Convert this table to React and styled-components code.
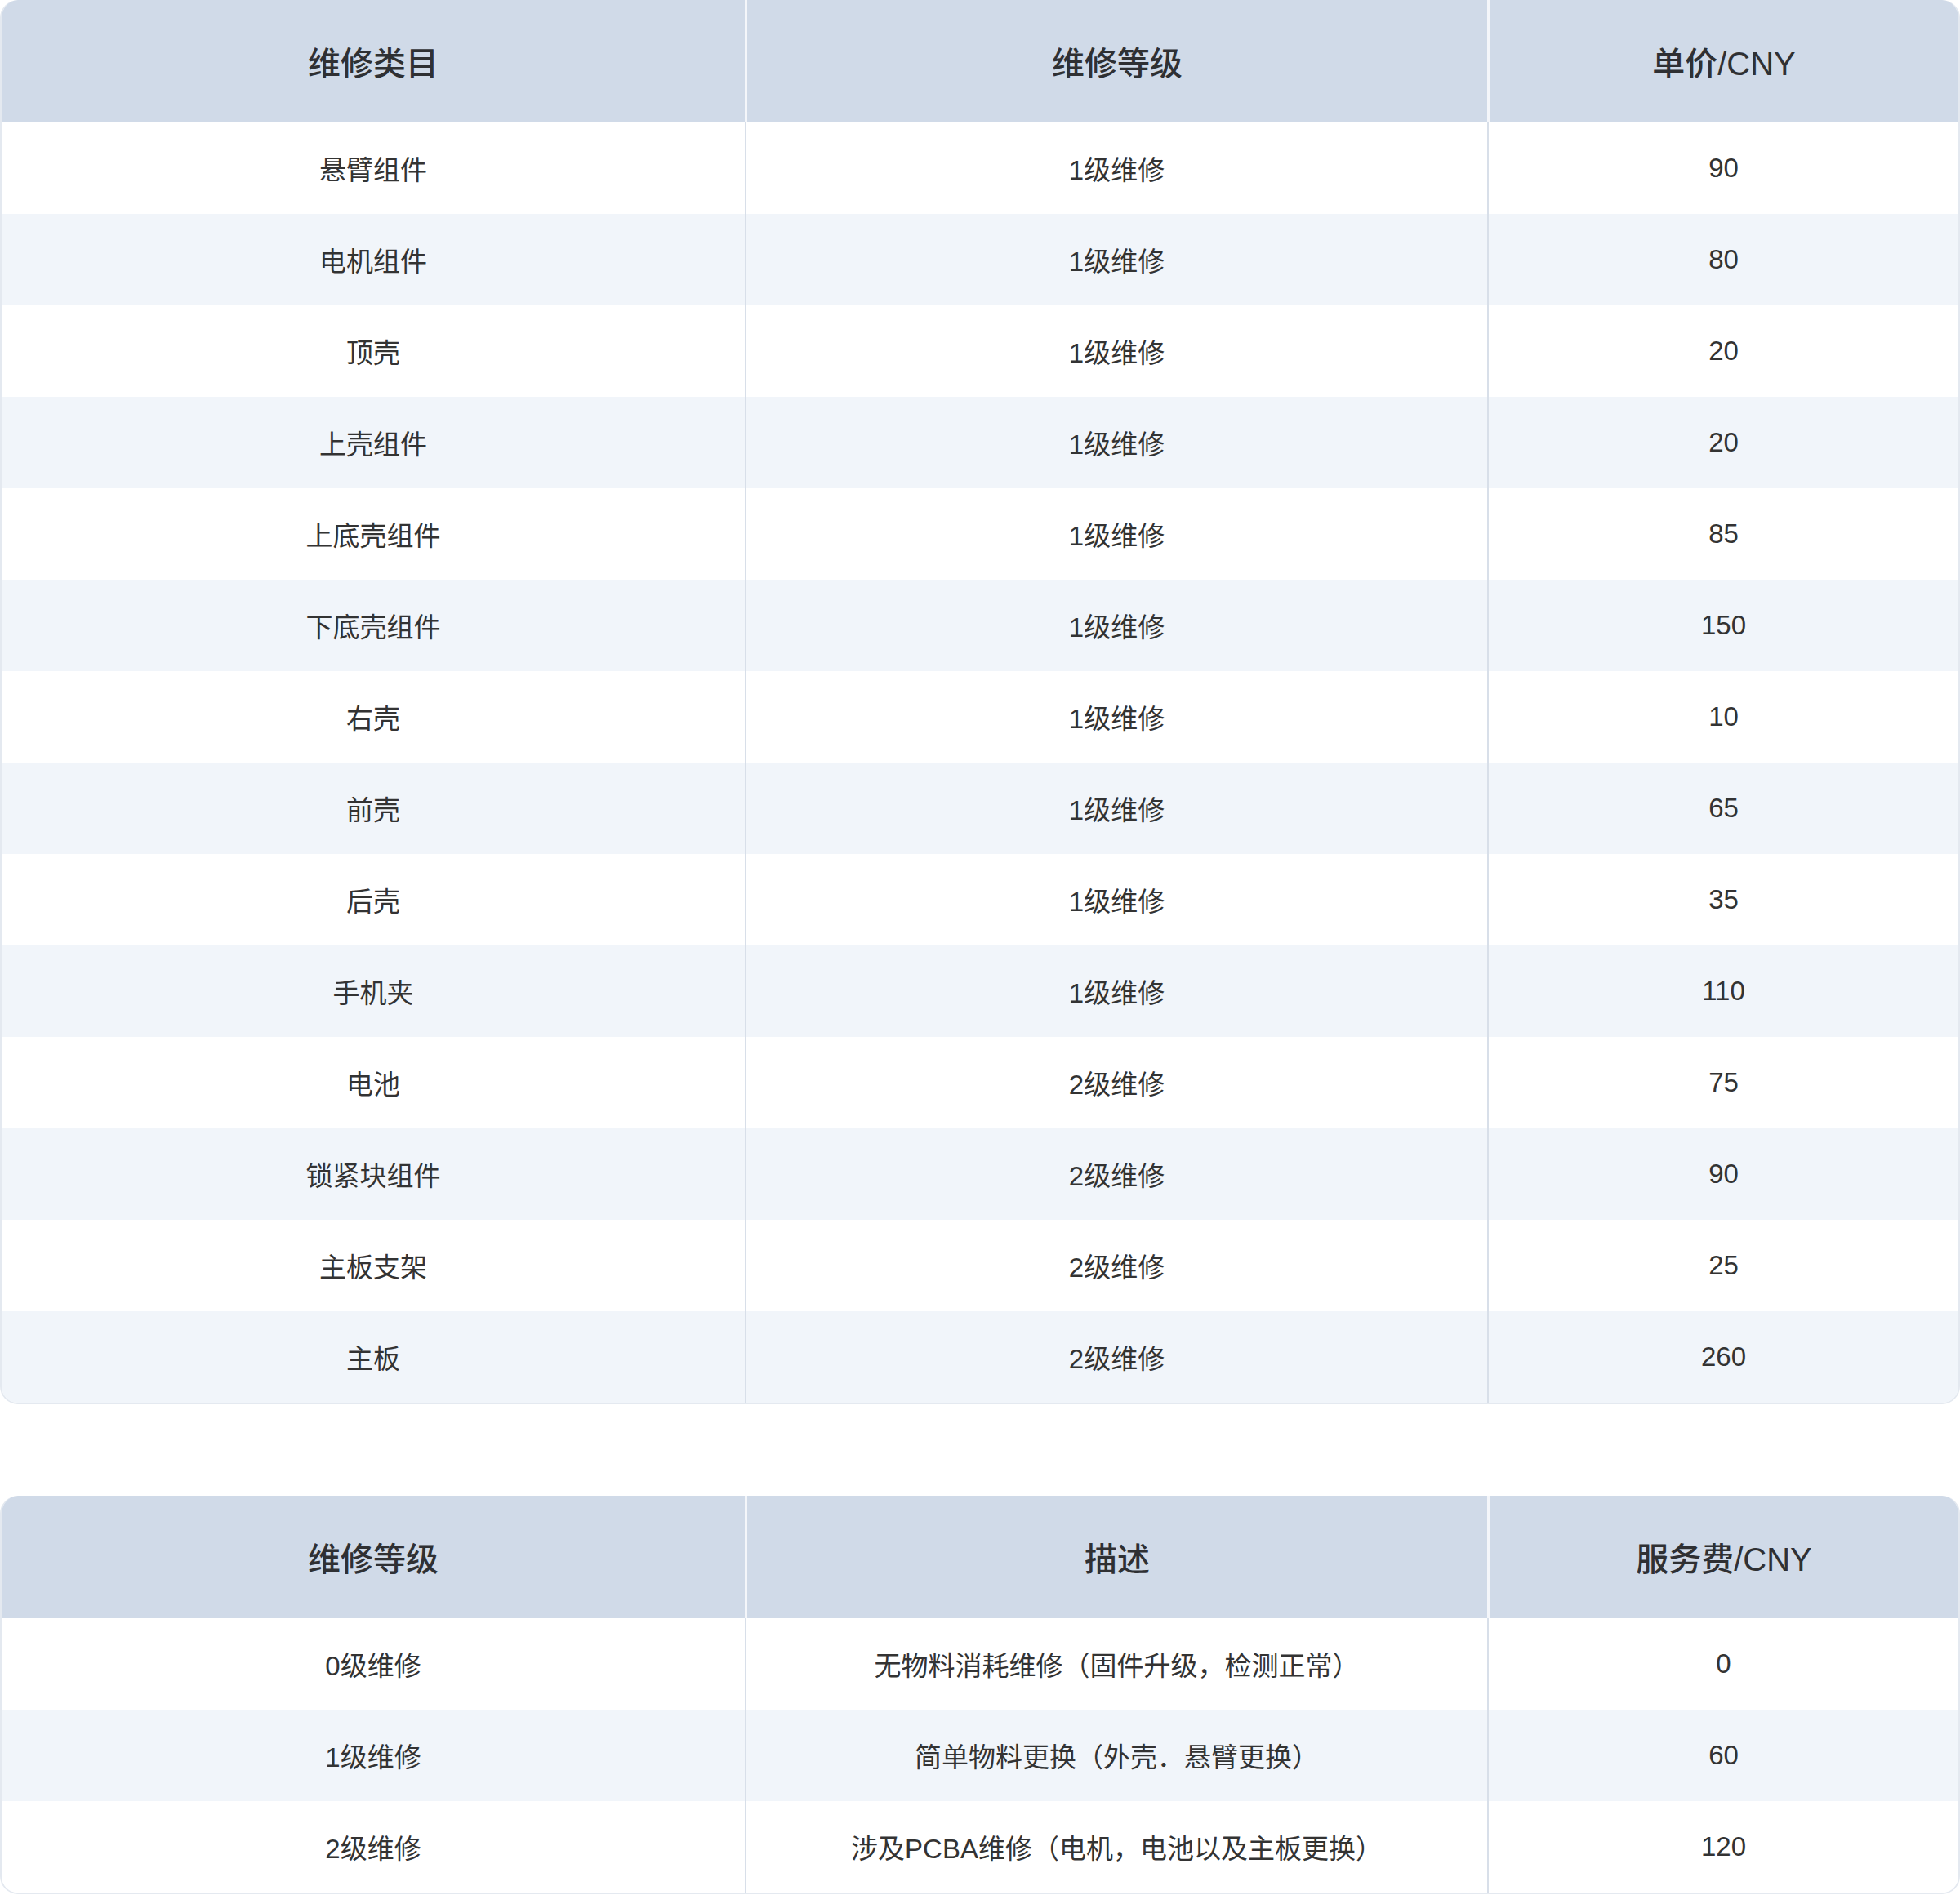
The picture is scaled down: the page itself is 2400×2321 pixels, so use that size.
import React from 'react'
import styled, {createGlobalStyle} from 'styled-components'

const GlobalStyle = createGlobalStyle`
  html, body {
    margin: 0;
    padding: 0;
    background: #ffffff;
  }
  body {
    font-family: "Liberation Sans", "Noto Sans CJK SC", sans-serif;
    color: #333333;
  }
`

const Page = styled.div`
  display: flex;
  flex-direction: column;
  gap: 112px;
  width: 2400px;
`

const Card = styled.div`
  border: 2px solid #e4e9f0;
  border-top: none;
  border-radius: 22px;
  overflow: hidden;
  background: #ffffff;
`

const Grid = styled.div`
  display: grid;
  grid-template-columns: 910px 909px 1fr;
`

const HeadCell = styled.div`
  height: 150px;
  display: flex;
  align-items: center;
  justify-content: center;
  background: #d0dae8;
  font-size: 40px;
  font-weight: 500;
  color: #2f3033;
  border-left: ${p => (p.first ? 'none' : '3px solid #f4f6fa')};
`

const Cell = styled.div`
  height: 112px;
  display: flex;
  align-items: center;
  justify-content: center;
  font-size: 33px;
  color: #333333;
  background: ${p => (p.odd ? '#f1f5fa' : '#ffffff')};
  border-left: ${p => (p.first ? 'none' : '2px solid #d8dfe9')};
`

const PriceTable = ({columns, rows}) => (
  <Card>
    <Grid>
      {columns.map((c, i) => (
        <HeadCell key={c} first={i === 0}>{c}</HeadCell>
      ))}
      {rows.map((r, ri) =>
        r.map((v, ci) => (
          <Cell key={ri + '-' + ci} first={ci === 0} odd={ri % 2 === 1}>{v}</Cell>
        ))
      )}
    </Grid>
  </Card>
)

const parts = [
  ['悬臂组件', '1级维修', '90'],
  ['电机组件', '1级维修', '80'],
  ['顶壳', '1级维修', '20'],
  ['上壳组件', '1级维修', '20'],
  ['上底壳组件', '1级维修', '85'],
  ['下底壳组件', '1级维修', '150'],
  ['右壳', '1级维修', '10'],
  ['前壳', '1级维修', '65'],
  ['后壳', '1级维修', '35'],
  ['手机夹', '1级维修', '110'],
  ['电池', '2级维修', '75'],
  ['锁紧块组件', '2级维修', '90'],
  ['主板支架', '2级维修', '25'],
  ['主板', '2级维修', '260']
]

const levels = [
  ['0级维修', '无物料消耗维修（固件升级，检测正常）', '0'],
  ['1级维修', '简单物料更换（外壳．悬臂更换）', '60'],
  ['2级维修', '涉及PCBA维修（电机，电池以及主板更换）', '120']
]

const App = () => (
  <>
    <GlobalStyle />
    <Page>
      <PriceTable columns={['维修类目', '维修等级', '单价/CNY']} rows={parts} />
      <PriceTable columns={['维修等级', '描述', '服务费/CNY']} rows={levels} />
    </Page>
  </>
)

export default App
